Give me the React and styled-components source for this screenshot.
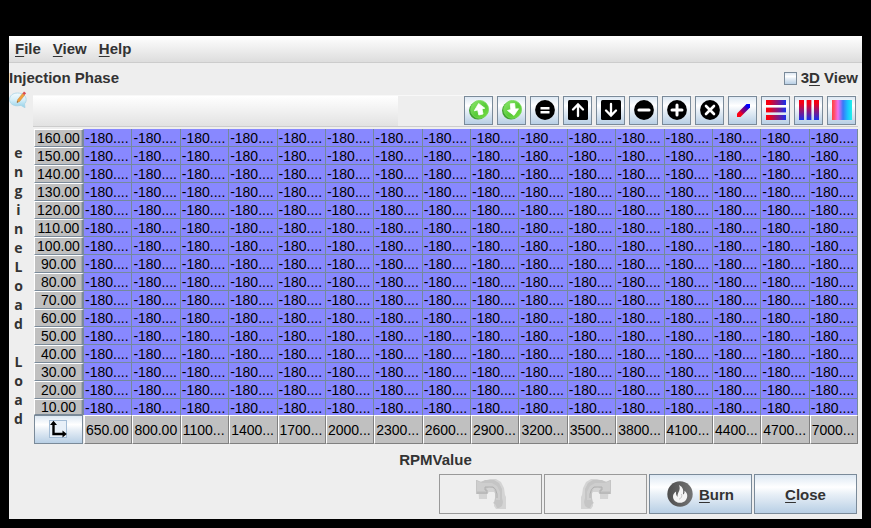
import React, { useState } from "react";
import styled, { createGlobalStyle } from "styled-components";

const GlobalStyle = createGlobalStyle`
  * { box-sizing: border-box; }
  body { margin: 0; background: #000; }
`;

const steel = "#7a8a99";
const metal = "linear-gradient(#dde8f3 0%, #ffffff 32%, #e9f0f7 50%, #b8cfe5 100%)";

const Window = styled.main`
  margin: 36px 9px 9px;
  background: #eeeeee;
  color: #333333;
  font: bold 15px/18px "Liberation Sans", Arial, sans-serif;
`;

const MenuBar = styled.nav`
  display: flex;
  gap: 12px;
  height: 27px;
  padding: 0 6px;
  background: linear-gradient(#ffffff, #dddddd);
  border-bottom: 1px solid #cccccc;
`;

const MenuButton = styled.button`
  border: 0;
  padding: 0;
  background: none;
  color: inherit;
  font: inherit;
`;

const Mnemonic = styled.span`
  text-decoration: underline;
  text-decoration-thickness: 1px;
  text-underline-offset: 2px;
  text-decoration-skip-ink: none;
`;

const TitleRow = styled.header`
  display: flex;
  justify-content: space-between;
  align-items: center;
  height: 28px;
  padding: 2px 4px 0 0;
`;

const Title = styled.h1`
  margin: 0;
  font: inherit;
`;

const CheckLabel = styled.label`
  display: flex;
  align-items: center;
  gap: 4px;
`;

const CheckBox = styled.input`
  appearance: none;
  width: 13px;
  height: 13px;
  margin: 0;
  border: 1px solid ${steel};
  background: ${metal};
  &:checked { background: #52677c; }
`;

const Editor = styled.section`
  display: grid;
  grid-template-columns: 24px 1fr;
  padding-right: 4px;
`;

const Side = styled.div`
  display: flex;
  flex-direction: column;
`;

const NoteButton = styled.button`
  display: block;
  width: 18px;
  height: 18px;
  padding: 0;
  border: 0;
  background: none;
`;

const AxisLetters = styled.div`
  display: flex;
  flex-direction: column;
  align-items: center;
  padding: 34px 5px 0 0;
  font: bold 14px/19px "Open Sans", "Noto Sans", sans-serif;
`;

const AxisLetter = styled.span`
  height: 19px;
`;

const Panel = styled.div`
  min-width: 0;
  padding-top: 4px;
`;

const ToolBar = styled.div`
  display: flex;
  justify-content: space-between;
  height: 32px;
  border-bottom: 1px solid #cccccc;
  border-top: 1px solid #f8f8f8;
  margin-bottom: 2px;
`;

const ToolStatus = styled.div`
  flex: 0 1 365px;
  background: linear-gradient(#ffffff, #e2e2e2);
`;

const Tools = styled.div`
  display: flex;
  gap: 4px;
  padding-right: 2px;
`;

const ToolButton = styled.button`
  display: grid;
  place-items: center;
  width: 29px;
  height: 29px;
  padding: 0 0 1px;
  border: 1px solid ${steel};
  background: ${metal};
`;

const Grid = styled.table`
  width: calc(100% - 1px);
  margin-left: 1px;
  table-layout: fixed;
  border-collapse: separate;
  border-spacing: 0;
  color: #000;
  font: 14px/17px "Liberation Sans", Arial, sans-serif;
`;

const HeadCol = styled.col`
  width: 50px;
`;

const RowHead = styled.th`
  height: ${(p) => (p.$last ? 16 : 18)}px;
  padding: 0;
  border-top: 1px solid #fff;
  border-left: 1px solid #fff;
  border-right: 2px solid ${steel};
  border-bottom: 1px solid ${steel};
  box-shadow: inset -1px 0 #a5a9ad;
  background: #c0c0c0;
  font-weight: normal;
  line-height: ${(p) => (p.$last ? 14 : 16)}px;
`;

const Cell = styled.td`
  height: ${(p) => (p.$last ? 16 : 18)}px;
  padding: 2px 0 0 1px;
  border-right: 1px solid #748a9c;
  border-bottom: ${(p) => (p.$last ? "0" : "1px solid #748a9c")};
  background: #8888ff;
  overflow: hidden;
  white-space: nowrap;
  line-height: ${(p) => (p.$last ? 14 : 15)}px;
`;

const ColHead = styled.th`
  height: 29px;
  padding: 2px 0 0 1px;
  border: 1px solid #fff;
  border-right-color: #808080;
  border-bottom-color: #808080;
  background: #c0c0c0;
  font-weight: normal;
  overflow: hidden;
  white-space: nowrap;
  text-align: left;
`;

const Corner = styled.td`
  padding: 0;
`;

const CornerButton = styled.button`
  display: grid;
  place-items: center;
  width: 49px;
  height: 29px;
  padding: 0;
  border: 1px solid ${steel};
  background: ${metal};
`;

const AxisName = styled.div`
  padding: 7px 0 5px;
  text-align: center;
`;

const Actions = styled.footer`
  display: flex;
  justify-content: flex-end;
  gap: 2px;
  padding: 0 5px 5px 0;
`;

const ActionButton = styled.button`
  display: flex;
  align-items: center;
  justify-content: center;
  gap: 6px;
  width: 103px;
  height: 40px;
  padding: 0;
  border: 1px solid ${steel};
  background: ${metal};
  color: #333;
  font: inherit;
  line-height: 20px;
  &:disabled { border-color: #999; background: #eeeeee; }
`;

const ActionText = styled.span`
  padding-top: 2px;
`;

const Svg = ({ size = 20, children }) => (
  <svg width={size} height={size} viewBox={`0 0 ${size} ${size}`} aria-hidden="true">{children}</svg>
);

const Green = ({ down }) => (
  <Svg>
    <defs>
      <linearGradient id="lime" x1="0" y1="0" x2="1" y2="1">
        <stop offset="0" stopColor="#8fe870" /><stop offset="0.55" stopColor="#58cc38" /><stop offset="1" stopColor="#7ddd45" />
      </linearGradient>
    </defs>
    <ellipse cx="9" cy="10.6" rx="9" ry="9" fill="#3f9f30" />
    <circle cx="10.6" cy="9.4" r="9" fill="url(#lime)" stroke="#74d858" strokeWidth="0.8" />
    <path
      d={down ? "M8.300 3.800 12.600 3.500 13.200 9 16.500 8.800 12 15.400 5.500 10.500 8.800 9.600Z" : "M9.600 3.500 15.800 8.200 13 8.900 14 14 9.800 15 8.700 10 5.300 10.800Z"}
      fill="#fff" stroke="#fff" strokeWidth="0.8" strokeLinejoin="round"
    />
  </Svg>
);

const Round = ({ d, width = 2.6, cap = "round" }) => (
  <Svg>
    <circle cx="10" cy="10" r="9.9" fill="#000" />
    <path d={d} stroke="#fff" strokeWidth={width} strokeLinecap={cap} fill="none" />
  </Svg>
);

const Square = ({ d }) => (
  <Svg>
    <rect width="20" height="20" rx="1.5" fill="#000" />
    <path d={d} stroke="#fff" strokeWidth="2.3" fill="none" strokeLinecap="round" />
  </Svg>
);

const Slash = () => (
  <Svg>
    <defs><linearGradient id="slash" gradientUnits="userSpaceOnUse" x1="4" y1="17" x2="17" y2="4">
      <stop offset="0.1" stopColor="#ff0010" /><stop offset="0.3" stopColor="#f00020" /><stop offset="0.4" stopColor="#a00060" /><stop offset="0.7" stopColor="#4000b0" /><stop offset="0.8" stopColor="#0000ff" />
    </linearGradient></defs>
    <path d="M4 13.500 13.500 4H17v3.500L7.500 17H4Z" fill="url(#slash)" />
  </Svg>
);

const Bars = ({ vertical }) => (
  <Svg>
    <defs><linearGradient id={vertical ? "barV" : "barH"} gradientUnits="userSpaceOnUse" x1="0" y1="0" x2={vertical ? 0 : 20} y2={vertical ? 20 : 0}>
      <stop offset="0.15" stopColor="#f50012" /><stop offset="1" stopColor="#1630ee" />
    </linearGradient></defs>
    {vertical ? (
      <g fill="url(#barV)"><path d="M0 0h5v20H0zM8 0h4v20H8zM15 0h5v20h-5z" /><path d="M7 0h1v20H7zM12 0h1v20h-1z" opacity="0.4" /></g>
    ) : (
      <g fill="url(#barH)"><path d="M0 0h20v5H0zM0 8h20v4H0zM0 15h20v5H0z" /><path d="M0 7h20v1H0zM0 12h20v1H0z" opacity="0.4" /></g>
    )}
  </Svg>
);

const Spectrum = () => (
  <Svg>
    <defs><linearGradient id="spectrum">
      <stop offset="0" stopColor="#ff4040" /><stop offset="0.12" stopColor="#ff5070" /><stop offset="0.3" stopColor="#f070f0" />
      <stop offset="0.55" stopColor="#3a78f8" /><stop offset="0.8" stopColor="#18c8ff" /><stop offset="1" stopColor="#20f0e8" />
    </linearGradient></defs>
    <rect width="20" height="20" fill="url(#spectrum)" />
  </Svg>
);

const Note = () => (
  <Svg size={18}>
    <defs><linearGradient id="bubble" x1="0" y1="0" x2="0" y2="1">
      <stop offset="0" stopColor="#f4fbfe" /><stop offset="0.5" stopColor="#d3edf7" /><stop offset="1" stopColor="#8fcfe8" />
    </linearGradient></defs>
    <path d="M8.500 2C3.800 2 .5 4.800.5 8.500c0 3.800 3.500 6.500 8 6.300l3.500-.4 4 2.400-.5-4c1.200-1.100 1.700-2.600 1.700-4.300C17.200 4.800 13.400 2 8.500 2Z" fill="url(#bubble)" stroke="#a8d4e6" strokeWidth="0.8" />
    <path d="m8 11.600.6-2.800L13.600 2.400l2 1.700-5 6.400Z" fill="#f3a03c" stroke="#c08038" strokeWidth="0.500" />
    <path d="m13.600 2.400 1.400-1.800 2.100 1.700-1.500 1.800Z" fill="#d9484f" />
    <path d="m8 11.600.3-1.300.9.800Z" fill="#444" />
  </Svg>
);

const Axes = () => (
  <Svg size={19}>
    <rect x="0.5" y="0.5" width="17" height="17" fill="#e8f0f8" stroke="#a3bcd5" />
    <path d="M4.500 3v11H15" fill="none" stroke="#000" strokeWidth="2.400" />
    <path d="M4.500.8 8 5H1ZM17.800 14 13.500 10.500v7Z" fill="#000" />
  </Svg>
);

const Turn = ({ flip }) => (
  <svg width="30" height="30" viewBox="0 0 30 30" aria-hidden="true">
    <g transform={flip ? "matrix(-1 0 0 1 30 0)" : undefined}>
      <path d="M2 3 8 2l6-2h6l5 3 3 6 1 7 1 2v12H20l-2-3v-5l2-6-2-3h-5l-2 2v5H3Z" fill="#d4d4d4" />
      <path d="M0 1h1l4 2 4-2h9l5 3 3 6v9l1 4-1 4-3 2h-2l-2-4-2-1 2-2V13l-2-4-4-1-3 2 2 5H0Z" fill="#c5c5c5" />
      <path d="M1 2l5 2h10l5 3 3 6v8h-4v-8l-3-5H9v4H1Z" fill="#cecece" />
      <path d="M1 14h10v-3H9V8h8q3 1 4 7v4" fill="none" stroke="#b0b0b0" />
    </g>
  </svg>
);

const Burn = () => (
  <Svg size={26}>
    <defs><linearGradient id="coal" x1="0" y1="0" x2="1" y2="0">
      <stop offset="0" stopColor="#4e4e4e" /><stop offset="1" stopColor="#747474" />
    </linearGradient></defs>
    <circle cx="13" cy="13" r="12.700" fill="url(#coal)" />
    <path d="M12 4c4.200 2.300 4.800 5.200 3.900 9.500 1.600-.7 1.800-2 1.500-3.800 2.300 1.500 3.200 3.600 2.800 6.100-.6 3.700-3.300 6-6.900 6-4.100 0-7.200-2.500-7.300-6.100 0-2.300 1.200-4.100 3.100-5.200-.4 2.700.2 4.300 1.700 5.300C9.500 12 14.500 9.500 12 4Z" fill="#f4f4f4" />
    <path d="M14.300 13c1.200 2.200.2 4.200-2.300 5.200" stroke="#b5b5b5" strokeWidth="0.700" fill="none" />
  </Svg>
);

const tools = [
  ["Increase", <Green />],
  ["Decrease", <Green down />],
  ["Set equal", <Round d="M5.500 8.200H14.500M5.500 12.200H14.500" width={2.4} cap="butt" />],
  ["Shift up", <Square d="M10 16V5M5 9.500 10 4.500 15 9.500" />],
  ["Shift down", <Square d="M10 4V15M5 10.500 10 15.500 15 10.500" />],
  ["Subtract", <Round d="M5 10H15" width={3.2} />],
  ["Add", <Round d="M5 10H15M10 5V15" width={3} />],
  ["Multiply", <Round d="M6 6 14 14M14 6 6 14" />],
  ["Interpolate", <Slash />],
  ["Interpolate rows", <Bars />],
  ["Interpolate columns", <Bars vertical />],
  ["Smooth", <Spectrum />],
];

const loads = Array.from({ length: 16 }, (_, i) => `${160 - i * 10}.00`);
const rpms = ["650.00", "800.00", ...[1100, 1400, 1700, 2000, 2300, 2600, 2900, 3200, 3500, 3800, 4100, 4400, 4700, 7000].map((n) => `${n}...`)];

const Key = ({ text }) => (
  <span><Mnemonic>{text[0]}</Mnemonic>{text.slice(1)}</span>
);

export default function App() {
  const [view3d, setView3d] = useState(false);
  return (
    <>
      <GlobalStyle />
      <Window>
        <MenuBar>
          {["File", "View", "Help"].map((m) => <MenuButton key={m}><Key text={m} /></MenuButton>)}
        </MenuBar>
        <TitleRow>
          <Title>Injection Phase</Title>
          <CheckLabel>
            <CheckBox type="checkbox" checked={view3d} onChange={(e) => setView3d(e.target.checked)} />
            <span>3<Mnemonic>D</Mnemonic> View</span>
          </CheckLabel>
        </TitleRow>
        <Editor>
          <Side>
            <NoteButton aria-label="Notes"><Note /></NoteButton>
            <AxisLetters>
              {[..."engineLoad Load"].map((c, i) => <AxisLetter key={i}>{c}</AxisLetter>)}
            </AxisLetters>
          </Side>
          <Panel>
            <ToolBar>
              <ToolStatus />
              <Tools>
                {tools.map(([name, icon]) => <ToolButton key={name} aria-label={name}>{icon}</ToolButton>)}
              </Tools>
            </ToolBar>
            <Grid>
              <colgroup>
                <HeadCol />
                {rpms.map((r) => <col key={r} />)}
              </colgroup>
              <tbody>
                {loads.map((load, i) => (
                  <tr key={load}>
                    <RowHead scope="row" $last={i === 15}>{load}</RowHead>
                    {rpms.map((r) => <Cell key={r} $last={i === 15}>-180....</Cell>)}
                  </tr>
                ))}
              </tbody>
              <tfoot>
                <tr>
                  <Corner><CornerButton aria-label="Swap axes"><Axes /></CornerButton></Corner>
                  {rpms.map((r) => <ColHead key={r} scope="col">{r}</ColHead>)}
                </tr>
              </tfoot>
            </Grid>
          </Panel>
        </Editor>
        <AxisName>RPMValue</AxisName>
        <Actions>
          <ActionButton disabled aria-label="Undo"><Turn /></ActionButton>
          <ActionButton disabled aria-label="Redo"><Turn flip /></ActionButton>
          <ActionButton><Burn /><ActionText><Key text="Burn" /></ActionText></ActionButton>
          <ActionButton><ActionText><Key text="Close" /></ActionText></ActionButton>
        </Actions>
      </Window>
    </>
  );
}
